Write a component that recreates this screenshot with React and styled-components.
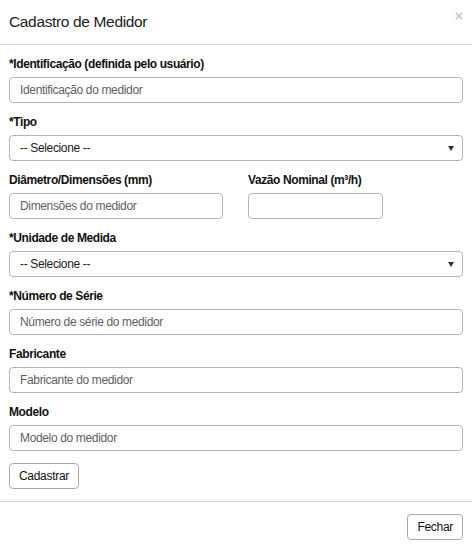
import React from 'react';
import styled, { createGlobalStyle } from 'styled-components';

const GlobalStyle = createGlobalStyle`
  body {
    margin: 0;
    background: #fff;
    font-family: "Liberation Sans", Arial, sans-serif;
    color: #222;
  }
  * { box-sizing: border-box; }
`;

const Modal = styled.div`
  width: 472px;
  background: #fff;
`;

const Header = styled.div`
  height: 45px;
  padding: 0 9px;
  display: flex;
  align-items: center;
  justify-content: space-between;
  border-bottom: 1px solid #d4d4d4;
`;

const Title = styled.h4`
  margin: 0;
  font-size: 15.5px;
  font-weight: normal;
  letter-spacing: -0.35px;
  color: #222;
  line-height: 20px;
`;

const Close = styled.button`
  border: 0;
  background: none;
  padding: 0;
  margin: -12px 0 0 0;
  font-size: 14px;
  font-weight: bold;
  color: #c4c4c4;
  font-family: "Liberation Sans", Arial, sans-serif;
  cursor: pointer;
`;

const Body = styled.form`
  padding: 11px 9px 12px 9px;
`;

const Group = styled.div`
  display: flex;
  flex-direction: column;
  margin-bottom: 11px;
  width: ${({ $width }) => $width || 'auto'};
`;

const Row = styled.div`
  display: flex;
  gap: 25px;
`;

const Label = styled.label`
  font-size: 12px;
  font-weight: bold;
  letter-spacing: -0.4px;
  line-height: 17px;
  margin-bottom: 4px;
  color: #111;
`;

const Input = styled.input`
  height: 26px;
  width: 100%;
  border: 1px solid #b4b4b4;
  border-radius: 4px;
  padding: 0 10px;
  font-size: 12px;
  letter-spacing: -0.35px;
  font-family: "Liberation Sans", Arial, sans-serif;
  color: #222;
  background: #fff;

  &::placeholder {
    color: #5f5f5f;
  }
`;

const SelectWrap = styled.div`
  position: relative;

  &::after {
    content: '';
    position: absolute;
    right: 9px;
    top: 11px;
    border-left: 3px solid transparent;
    border-right: 3px solid transparent;
    border-top: 5px solid #333;
    pointer-events: none;
  }
`;

const Select = styled.select`
  appearance: none;
  height: 26px;
  width: 100%;
  border: 1px solid #b4b4b4;
  border-radius: 4px;
  padding: 0 10px;
  font-size: 12px;
  letter-spacing: -0.35px;
  font-family: "Liberation Sans", Arial, sans-serif;
  color: #222;
  background: #fff;
`;

const Button = styled.button`
  height: 26px;
  padding: 0 9px;
  margin-top: ${({ $top }) => $top || 0}px;
  border: 1px solid #aaa;
  border-radius: 4px;
  background: #fff;
  font-size: 12px;
  letter-spacing: -0.3px;
  font-family: "Liberation Sans", Arial, sans-serif;
  color: #111;
`;

const Footer = styled.div`
  border-top: 1px solid #d4d4d4;
  padding: 12px 9px;
  display: flex;
  justify-content: flex-end;
`;

const Field = ({ label, placeholder, width }) => (
  <Group $width={width}>
    <Label>{label}</Label>
    <Input placeholder={placeholder} />
  </Group>
);

const SelectField = ({ label }) => (
  <Group>
    <Label>{label}</Label>
    <SelectWrap>
      <Select defaultValue="">
        <option value="">-- Selecione --</option>
      </Select>
    </SelectWrap>
  </Group>
);

export default function App() {
  return (
    <>
      <GlobalStyle />
      <Modal>
        <Header>
          <Title>Cadastro de Medidor</Title>
          <Close type="button">×</Close>
        </Header>
        <Body onSubmit={(e) => e.preventDefault()}>
          <Field label="*Identificação (definida pelo usuário)" placeholder="Identificação do medidor" />
          <SelectField label="*Tipo" />
          <Row>
            <Field label="Diâmetro/Dimensões (mm)" placeholder="Dimensões do medidor" width="214px" />
            <Field label="Vazão Nominal (m³/h)" width="135px" />
          </Row>
          <SelectField label="*Unidade de Medida" />
          <Field label="*Número de Série" placeholder="Número de série do medidor" />
          <Field label="Fabricante" placeholder="Fabricante do medidor" />
          <Field label="Modelo" placeholder="Modelo do medidor" />
          <Button type="submit" $top={1}>Cadastrar</Button>
        </Body>
        <Footer>
          <Button type="button">Fechar</Button>
        </Footer>
      </Modal>
    </>
  );
}
